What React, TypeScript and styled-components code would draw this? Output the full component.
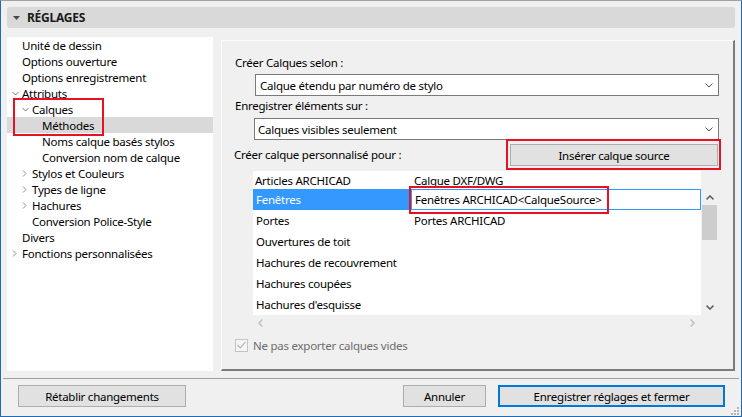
import React from 'react';
import styled, { createGlobalStyle } from 'styled-components';

const Global = createGlobalStyle`
  html, body { margin: 0; padding: 0; background: #f0f0f0; }
  body { font-family: "Noto Sans", "Segoe UI", sans-serif; font-size: 11.5px; letter-spacing: -0.25px; color: #000; }
  * { box-sizing: border-box; }
`;

const Window = styled.div`
  width: 742px;
  height: 417px;
  background: #f0f0f0;
  border-top: 1px solid #a0a0a0;
  border-left: 1px solid #1f6cb6;
  border-right: 1px solid #1f6cb6;
  border-bottom: 1px solid #1f6cb6;
  display: flex;
  flex-direction: column;
  position: relative;
  overflow: hidden;
`;

const Header = styled.div`
  margin: 6px 6px 0 6px;
  height: 21px;
  background: #d9d9d9;
  border-radius: 3px;
  display: flex;
  align-items: center;
  padding-left: 6px;
  gap: 7px;
  font-weight: 700;
  font-size: 12px;
  color: #1a1a1a;
`;

const Body = styled.div`
  margin-top: 9px;
  height: 334px;
  display: flex;
  padding: 0 6px;
  gap: 8px;
  align-items: flex-start;
`;

const Tree = styled.div`
  width: 206px;
  height: 334px;
  background: #fff;
  position: relative;
  flex-shrink: 0;
`;

const TreeRow = styled.div<{ $level: number; $selected?: boolean }>`
  height: 16px;
  line-height: 15px;
  padding-top: 1px;
  display: flex;
  align-items: center;
  padding-left: ${(p) => 5 + p.$level * 10}px;
  background: ${(p) => (p.$selected ? '#d9d9d9' : 'transparent')};
  white-space: nowrap;
`;

const ArrowSlot = styled.span`
  width: 10px;
  height: 15px;
  display: flex;
  align-items: center;
  flex-shrink: 0;
`;

const Highlight = styled.div`
  position: absolute;
  border: 2px solid #e81123;
  pointer-events: none;
`;

const Panel = styled.div`
  margin-top: 3px;
  width: 514px;
  height: 331px;
  border-top: 1px solid #fbfbfb;
  border-left: 1px solid #fbfbfb;
  border-right: 2px solid #7c7c7c;
  border-bottom: 2px solid #7c7c7c;
  display: flex;
  flex-direction: column;
  padding: 14px 14px 0 13px;
`;

const Label = styled.div<{ $mt?: number }>`
  height: 16px;
  line-height: 16px;
  margin-top: ${(p) => p.$mt ?? 0}px;
  white-space: nowrap;
`;

const Select = styled.div<{ $ml: number; $pl: number; $mt: number }>`
  margin-top: ${(p) => p.$mt}px;
  margin-left: ${(p) => p.$ml - 13}px;
  height: 22px;
  background: #fff;
  border: 1px solid #7a7a7a;
  display: flex;
  align-items: center;
  justify-content: space-between;
  padding: 0 5px 0 ${(p) => p.$pl}px;
  white-space: nowrap;
`;

const InsertRow = styled.div`
  margin-top: 4px;
  height: 22px;
  display: flex;
  align-items: center;
  justify-content: space-between;
  margin-left: -1px;
`;

const ButtonWrap = styled.div`
  position: relative;
  margin-right: 1px;
`;

const Button = styled.div<{ $w: number; $default?: boolean }>`
  width: ${(p) => p.$w}px;
  height: 22px;
  background: #e1e1e1;
  border: ${(p) => (p.$default ? '2px solid #0078d7' : '1px solid #adadad')};
  display: flex;
  align-items: center;
  justify-content: center;
  white-space: nowrap;
  color: #000;
`;

const Table = styled.div`
  margin-top: 5px;
  margin-left: 18px;
  width: 465px;
  height: 144px;
  display: flex;
`;

const Grid = styled.div`
  width: 448px;
  background: #fff;
  display: grid;
  grid-template-columns: 158px 290px;
  grid-template-rows: 18px repeat(6, 21px);
  overflow: hidden;
`;

const Cell = styled.div<{ $selected?: boolean; $pl?: number }>`
  display: flex;
  align-items: center;
  padding-left: ${(p) => p.$pl ?? 3}px;
  white-space: nowrap;
  background: ${(p) => (p.$selected ? '#3399ff' : 'transparent')};
  color: ${(p) => (p.$selected ? '#fff' : '#000')};
`;

const EditCell = styled.div`
  position: relative;
  display: flex;
  align-items: center;
  padding-left: 3px;
  border: 1px solid #3399ff;
  white-space: nowrap;
`;

const VScroll = styled.div`
  width: 17px;
  display: flex;
  flex-direction: column;
  padding-top: 18px;
  background: #f0f0f0;
`;

const ScrollBtn = styled.div`
  height: 16px;
  display: flex;
  align-items: center;
  justify-content: center;
`;

const Thumb = styled.div`
  margin: 0 1px;
  height: 35px;
  background: #cdcdcd;
`;

const Track = styled.div`
  flex: 1;
`;

const HScroll = styled.div`
  margin-left: 18px;
  width: 448px;
  height: 16px;
  display: flex;
  align-items: center;
  justify-content: space-between;
  padding: 0 6px 0 5px;
`;

const CheckRow = styled.div`
  margin-top: 7px;
  height: 14px;
  display: flex;
  align-items: center;
  gap: 5px;
  color: #6d6d6d;
`;

const CheckBox = styled.div`
  width: 13px;
  height: 13px;
  border: 1px solid #c4c4c4;
  background: #f5f5f5;
  display: flex;
  align-items: center;
  justify-content: center;
`;

const Separator = styled.div`
  margin: 7px 2px 0 2px;
  height: 1px;
  background: #a0a0a0;
`;

const Footer = styled.div`
  margin-top: 6px;
  height: 22px;
  display: flex;
  padding: 0 16px 0 17px;
  gap: 12px;
`;

const Spacer = styled.div`
  flex: 1;
`;

const Grip = styled.svg`
  position: absolute;
  right: 2px;
  bottom: 1px;
`;

const ChevronDown = ({ c = '#7a7a7a' }: { c?: string }) => (
  <svg width="7" height="5" viewBox="0 0 7 5">
    <path d="M0.5 1 L3.5 4 L6.5 1" fill="none" stroke={c} strokeWidth="1" />
  </svg>
);

const ChevronRight = ({ c = '#8a8a8a' }: { c?: string }) => (
  <svg width="5" height="7" viewBox="0 0 5 7">
    <path d="M1 0.5 L4 3.5 L1 6.5" fill="none" stroke={c} strokeWidth="1" />
  </svg>
);

const SelectChevron = () => (
  <svg width="8" height="5" viewBox="0 0 8 5">
    <path d="M0.5 0.5 L4 4 L7.5 0.5" fill="none" stroke="#555" strokeWidth="1" />
  </svg>
);

const ScrollUp = () => (
  <svg width="8" height="5" viewBox="0 0 8 5">
    <path d="M0.5 4.3 L4 1 L7.5 4.3" fill="none" stroke="#606060" strokeWidth="1.6" />
  </svg>
);

const ScrollDown = () => (
  <svg width="8" height="5" viewBox="0 0 8 5">
    <path d="M0.5 0.7 L4 4 L7.5 0.7" fill="none" stroke="#606060" strokeWidth="1.6" />
  </svg>
);

const ScrollLeft = () => (
  <svg width="5" height="8" viewBox="0 0 5 8">
    <path d="M4.3 0.5 L1 4 L4.3 7.5" fill="none" stroke="#c0c0c0" strokeWidth="1.6" />
  </svg>
);

const ScrollRight = () => (
  <svg width="5" height="8" viewBox="0 0 5 8">
    <path d="M0.7 0.5 L4 4 L0.7 7.5" fill="none" stroke="#c0c0c0" strokeWidth="1.6" />
  </svg>
);

type Node = { label: string; level: number; arrow?: 'down' | 'right'; selected?: boolean };

const nodes: Node[] = [
  { label: 'Unité de dessin', level: 0 },
  { label: 'Options ouverture', level: 0 },
  { label: 'Options enregistrement', level: 0 },
  { label: 'Attributs', level: 0, arrow: 'down' },
  { label: 'Calques', level: 1, arrow: 'down' },
  { label: 'Méthodes', level: 2, selected: true },
  { label: 'Noms calque basés stylos', level: 2 },
  { label: 'Conversion nom de calque', level: 2 },
  { label: 'Stylos et Couleurs', level: 1, arrow: 'right' },
  { label: 'Types de ligne', level: 1, arrow: 'right' },
  { label: 'Hachures', level: 1, arrow: 'right' },
  { label: 'Conversion Police-Style', level: 1 },
  { label: 'Divers', level: 0 },
  { label: 'Fonctions personnalisées', level: 0, arrow: 'right' },
];

const rows: [string, string][] = [
  ['Articles ARCHICAD', 'Calque DXF/DWG'],
  ['Fenêtres', 'Fenêtres ARCHICAD<CalqueSource>'],
  ['Portes', 'Portes ARCHICAD'],
  ['Ouvertures de toit', ''],
  ['Hachures de recouvrement', ''],
  ['Hachures coupées', ''],
  ["Hachures d'esquisse", ''],
];

export default function App() {
  return (
    <>
      <Global />
      <Window>
        <Header>
          <svg width="7" height="4" viewBox="0 0 7 4">
            <path d="M0 0 H7 L3.5 4 Z" fill="#4a4a4a" />
          </svg>
          <span>RÉGLAGES</span>
        </Header>
        <Body>
          <Tree>
            {nodes.map((n) => (
              <TreeRow key={n.label} $level={n.level} $selected={n.selected}>
                <ArrowSlot>
                  {n.arrow === 'down' && <ChevronDown />}
                  {n.arrow === 'right' && <ChevronRight />}
                </ArrowSlot>
                {n.label}
              </TreeRow>
            ))}
            <Highlight style={{ left: 6, top: 61, width: 91, height: 38 }} />
          </Tree>
          <Panel>
            <Label>Créer Calques selon :</Label>
            <Select $ml={33} $pl={4} $mt={3}>
              <span>Calque étendu par numéro de stylo</span>
              <SelectChevron />
            </Select>
            <Label $mt={2}>Enregistrer éléments sur :</Label>
            <Select $ml={32} $pl={3} $mt={4}>
              <span>Calques visibles seulement</span>
              <SelectChevron />
            </Select>
            <InsertRow>
              <Label>Créer calque personnalisé pour :</Label>
              <ButtonWrap>
                <Button $w={208}>Insérer calque source</Button>
                <Highlight style={{ left: -4, top: -5, right: -3, bottom: -4 }} />
              </ButtonWrap>
            </InsertRow>
            <Table>
              <Grid>
                {rows.map(([a, b], i) => (
                  <React.Fragment key={a}>
                    <Cell $selected={i === 1} $pl={i === 0 ? 2 : 3}>{a}</Cell>
                    {i === 1 ? (
                      <EditCell>
                        {b}
                        <Highlight style={{ left: -3, top: -4, width: 200, height: 28 }} />
                      </EditCell>
                    ) : (
                      <Cell>{b}</Cell>
                    )}
                  </React.Fragment>
                ))}
              </Grid>
              <VScroll>
                <ScrollBtn>
                  <ScrollUp />
                </ScrollBtn>
                <Thumb />
                <Track />
                <ScrollBtn>
                  <ScrollDown />
                </ScrollBtn>
              </VScroll>
            </Table>
            <HScroll>
              <ScrollLeft />
              <ScrollRight />
            </HScroll>
            <CheckRow>
              <CheckBox>
                <svg width="9" height="8" viewBox="0 0 9 8">
                  <path d="M0.5 4 L3.3 6.8 L8.5 0.8" fill="none" stroke="#b5b5b5" strokeWidth="1.2" />
                </svg>
              </CheckBox>
              <span>Ne pas exporter calques vides</span>
            </CheckRow>
          </Panel>
        </Body>
        <Separator />
        <Footer>
          <Button $w={168}>Rétablir changements</Button>
          <Spacer />
          <Button $w={83}>Annuler</Button>
          <Button $w={227} $default>
            Enregistrer réglages et fermer
          </Button>
        </Footer>
        <Grip width="8" height="8" viewBox="0 0 8 8">
          <rect x="6" y="0" width="2" height="2" fill="#b8b8b8" />
          <rect x="3" y="3" width="2" height="2" fill="#b8b8b8" />
          <rect x="6" y="3" width="2" height="2" fill="#b8b8b8" />
          <rect x="0" y="6" width="2" height="2" fill="#b8b8b8" />
          <rect x="3" y="6" width="2" height="2" fill="#b8b8b8" />
          <rect x="6" y="6" width="2" height="2" fill="#b8b8b8" />
        </Grip>
      </Window>
    </>
  );
}
